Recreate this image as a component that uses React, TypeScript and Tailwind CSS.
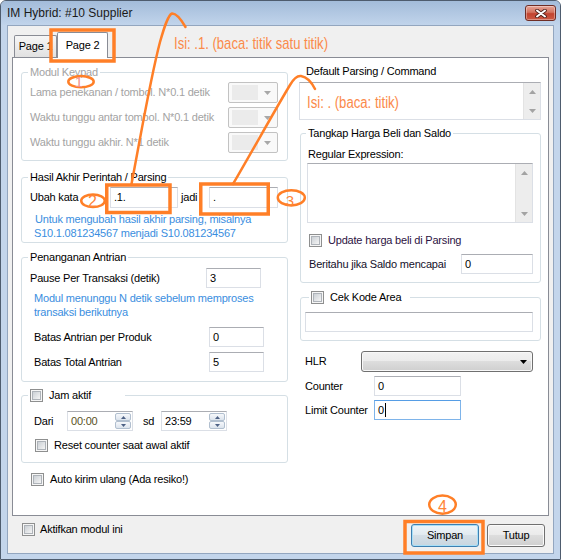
import React from "react";

function Check() {
  return (
    <span className="flex h-[13px] w-[13px] shrink-0 items-center justify-center border border-[#8e8f8f] bg-[#f6f6f6]">
      <span className="h-[9px] w-[9px] border border-[#aeb3b9] bg-gradient-to-br from-[#cbd0d5] to-[#f5f5f5]" />
    </span>
  );
}

function TextBox({
  className = "",
  focused = false,
  children,
}: {
  className?: string;
  focused?: boolean;
  children?: React.ReactNode;
}) {
  return (
    <div
      className={`flex items-center bg-white pl-[3px] text-black ${
        focused
          ? "border border-[#7eb4ea] border-t-[#569de5]"
          : "border border-[#dbdfe6] border-t-[#abadb3]"
      } ${className}`}
    >
      {children}
    </div>
  );
}

function Group({
  legend,
  className = "",
  legendClassName = "ml-[-2px]",
  children,
}: {
  legend: React.ReactNode;
  className?: string;
  legendClassName?: string;
  children?: React.ReactNode;
}) {
  return (
    <fieldset className={`min-w-0 rounded-[3px] border border-[#d5dfe5] ${className}`}>
      <legend className={`px-[2px] leading-[13px] ${legendClassName}`}>{legend}</legend>
      {children}
    </fieldset>
  );
}

function DisabledCombo() {
  return (
    <div className="flex h-[21px] w-[50px] items-center rounded-[2px] border border-[#c2c2c2] bg-[#f9f9f9] pl-[3px] pr-[6px]">
      <div className="h-[15px] w-[26px] bg-[#ebebeb]" />
      <svg className="ml-auto" width="7" height="4" viewBox="0 0 7 4">
        <polygon points="0,0 7,0 3.5,4" fill="#a8a8a8" />
      </svg>
    </div>
  );
}

function ScrollBox({ className = "" }: { className?: string }) {
  return (
    <div className={`flex border border-[#dbdfe6] border-t-[#abadb3] bg-white ${className}`}>
      <div className="flex-1" />
      <div className="flex w-[17px] flex-col justify-between border-l border-[#e3e3e3] bg-[#ededed]">
        <div className="flex h-[17px] items-center justify-center">
          <svg width="7" height="4" viewBox="0 0 7 4">
            <polygon points="0,4 7,4 3.5,0" fill="#a3a3a3" />
          </svg>
        </div>
        <div className="flex h-[17px] items-center justify-center">
          <svg width="7" height="4" viewBox="0 0 7 4">
            <polygon points="0,0 7,0 3.5,4" fill="#a3a3a3" />
          </svg>
        </div>
      </div>
    </div>
  );
}

function SpinHalf({ up }: { up?: boolean }) {
  return (
    <div className="flex h-[8px] items-center justify-center rounded-[2px] border border-[#b1bfcf] bg-gradient-to-b from-[#f6f8fb] to-[#dce4ed]">
      <svg width="5" height="3" viewBox="0 0 5 3">
        <polygon points={up ? "0,3 5,3 2.5,0" : "0,0 5,0 2.5,3"} fill="#4d6185" />
      </svg>
    </div>
  );
}

function TimeBox({ value, valueClass = "" }: { value: string; valueClass?: string }) {
  return (
    <div className="flex h-[20px] w-[66px] items-center border border-[#dbdfe6] border-t-[#abadb3] bg-white pl-[3px] pr-[1px]">
      <span className={valueClass}>{value}</span>
      <div className="ml-auto flex h-[16px] w-[16px] flex-col">
        <SpinHalf up />
        <SpinHalf />
      </div>
    </div>
  );
}

function LeftCol() {
  const keypadRows = [
    "Lama penekanan / tombol. N*0.1 detik",
    "Waktu tunggu antar tombol. N*0.1 detik",
    "Waktu tunggu akhir. N*1 detik",
  ];
  return (
    <div className="flex w-[267px] shrink-0 flex-col">
      <Group
        legend={<span className="text-[#a3a3a3]">Modul Keypad</span>}
        className="mt-[8px] pb-[7px] pl-[8px] pr-[9px] pt-[3px]"
      >
        <div className="flex flex-col gap-[4px]">
          {keypadRows.map((r) => (
            <div key={r} className="flex h-[21px] items-center justify-between text-[#a3a3a3]">
              <span>{r}</span>
              <DisabledCombo />
            </div>
          ))}
        </div>
      </Group>

      <Group
        legend="Hasil Akhir Perintah / Parsing"
        className="mt-[10px] pb-[2px] pl-[8px] pr-[9px] pt-[3px]"
      >
        <div className="flex h-[21px] items-center">
          <span className="w-[80px]">Ubah kata</span>
          <TextBox className="h-[21px] w-[68px]">.1.</TextBox>
          <span className="ml-[3px] w-[28px]">jadi</span>
          <TextBox className="h-[21px] w-[69px]">.</TextBox>
        </div>
        <div className="mt-[4px] pl-[4px] leading-[14px] text-[#3a8ee0]">
          <div className="pl-[1px]">Untuk mengubah hasil akhir parsing, misalnya</div>
          <div>S10.1.081234567 menjadi S10.081234567</div>
        </div>
      </Group>

      <Group legend="Penanganan Antrian" className="mt-[8px] pb-[9px] pl-[8px] pr-[9px] pt-[4px]">
        <div className="flex h-[20px] items-center">
          <span className="w-[176px]">Pause Per Transaksi (detik)</span>
          <TextBox className="h-[20px] w-[55px]">3</TextBox>
        </div>
        <div className="mt-[3px] pl-[4px] leading-[14px] text-[#3a8ee0]">
          <div>Modul menunggu N detik sebelum memproses</div>
          <div>transaksi berikutnya</div>
        </div>
        <div className="mt-[8px] flex h-[20px] items-center pl-[4px]">
          <span className="w-[175px]">Batas Antrian per Produk</span>
          <TextBox className="h-[20px] w-[55px]">0</TextBox>
        </div>
        <div className="mt-[5px] flex h-[20px] items-center pl-[4px]">
          <span className="w-[175px]">Batas Total Antrian</span>
          <TextBox className="h-[20px] w-[55px]">5</TextBox>
        </div>
      </Group>

      <Group
        legend={
          <span className="flex w-[93px] items-center gap-[6px]">
            <Check />
            <span>Jam aktif</span>
          </span>
        }
        className="mt-[7px] pb-[10px] pl-[8px] pr-[9px] pt-[9px]"
      >
        <div className="flex h-[20px] items-center pl-[4px]">
          <span className="w-[33px]">Dari</span>
          <TimeBox value="00:00" valueClass="text-[#5a5224]" />
          <span className="ml-[10px] w-[18px]">sd</span>
          <TimeBox value="23:59" />
        </div>
        <div className="mt-[8px] flex items-center gap-[6px] pl-[5px]">
          <Check />
          <span className="leading-[13px]">Reset counter saat awal aktif</span>
        </div>
      </Group>

      <div className="ml-[10px] mt-[10px] flex items-center gap-[6px]">
        <Check />
        <span className="leading-[13px]">Auto kirim ulang (Ada resiko!)</span>
      </div>
    </div>
  );
}

function RightCol() {
  return (
    <div className="flex w-[242px] shrink-0 flex-col">
      <div className="mt-[7px] pl-[7px] leading-[13px]">Default Parsing / Command</div>
      <ScrollBox className="mt-[4px] h-[38px] w-[242px]" />

      <Group
        legend="Tangkap Harga Beli dan Saldo"
        className="ml-[1px] mt-[7px] w-[241px] pb-[8px] pl-[7px] pr-[7px] pt-[8px]"
      >
        <div className="leading-[13px]">Regular Expression:</div>
        <ScrollBox className="ml-[-1px] mt-[2px] h-[60px] w-[226px]" />
        <div className="ml-[1px] mt-[11px] flex items-center gap-[6px]">
          <Check />
          <span className="leading-[13px] text-[#2c1242]">Update harga beli di Parsing</span>
        </div>
        <div className="ml-[1px] mt-[7px] flex h-[20px] items-center">
          <span className="w-[152px] text-[#14102a]">Beritahu jika Saldo mencapai</span>
          <TextBox className="h-[20px] w-[72px]">0</TextBox>
        </div>
      </Group>

      <Group
        legend={
          <span className="flex w-[97px] items-center gap-[6px]">
            <Check />
            <span>Cek Kode Area</span>
          </span>
        }
        legendClassName="ml-[1px]"
        className="ml-[1px] mt-[8px] w-[241px] pb-[8px] pl-[7px] pr-[7px] pt-[8px]"
      >
        <TextBox className="ml-[-3px] h-[20px] w-[228px]" />
      </Group>

      <div className="mt-[10px] flex h-[21px] items-center pl-[6px]">
        <span className="w-[56px]">HLR</span>
        <div className="flex h-[21px] w-[172px] items-center justify-end rounded-[3px] border border-[#707070] bg-[linear-gradient(#f2f2f2,#ebebeb_50%,#dddddd_50%,#cfcfcf)] pr-[5px] shadow-[inset_0_0_0_1px_#f8f8f8]">
          <svg width="7" height="4" viewBox="0 0 7 4">
            <polygon points="0,0 7,0 3.5,4" fill="#000" />
          </svg>
        </div>
      </div>
      <div className="mt-[4px] flex h-[20px] items-center pl-[6px]">
        <span className="w-[69px]">Counter</span>
        <TextBox className="h-[20px] w-[87px]">0</TextBox>
      </div>
      <div className="mt-[4px] flex h-[20px] items-center pl-[6px]">
        <span className="w-[69px]">Limit Counter</span>
        <TextBox focused className="h-[20px] w-[87px]">
          <span>0</span>
          <span className="ml-[1px] h-[14px] w-[1px] bg-black" />
        </TextBox>
      </div>
    </div>
  );
}

function Annotations() {
  return (
    <svg
      className="pointer-events-none absolute left-0 top-0"
      width="561"
      height="560"
      viewBox="0 0 561 560"
    >
      <g fill="none" stroke="#ff7f27" strokeLinecap="round" strokeLinejoin="round">
        <rect x="51" y="30" width="63" height="31" strokeWidth="3.5" strokeLinecap="butt" strokeLinejoin="miter" />
        <rect x="106.75" y="185" width="63.25" height="27.5" strokeWidth="3.5" strokeLinecap="butt" strokeLinejoin="miter" />
        <rect x="200.75" y="184" width="67.5" height="30" strokeWidth="3.5" strokeLinecap="butt" strokeLinejoin="miter" />
        <rect x="405" y="521.5" width="78" height="31.5" strokeWidth="3.5" strokeLinecap="butt" strokeLinejoin="miter" />
        <ellipse cx="81" cy="81.7" rx="12.7" ry="5.6" strokeWidth="2.5" />
        <ellipse cx="93" cy="200.8" rx="11.8" ry="6.3" strokeWidth="2.5" />
        <ellipse cx="291.3" cy="197.8" rx="13.5" ry="7.6" strokeWidth="2.5" />
        <ellipse cx="442.5" cy="504.6" rx="13.3" ry="9.1" strokeWidth="2.5" />
        <path
          d="M131.5 184 C 140 140, 150 80, 160 42 C 164 28, 168 15, 172 13.5 C 177 13, 182 21, 185.5 27"
          strokeWidth="2.5"
        />
        <path
          d="M233 184 C 250 155, 275 110, 290 85 C 294 78, 297 75.5, 301 76 C 307 77, 312 83, 315 89"
          strokeWidth="2.5"
        />
      </g>
      <g fontFamily="'Liberation Sans', Arial, sans-serif" style={{ letterSpacing: 0 }}>
        <text x="174" y="49" fontSize="17" fill="#fb8a4a" textLength="154" lengthAdjust="spacingAndGlyphs">
          Isi: .1. (baca: titik satu titik)
        </text>
        <text x="307" y="107.5" fontSize="16" fill="#fb8a4a" textLength="92" lengthAdjust="spacingAndGlyphs">
          Isi: . (baca: titik)
        </text>
        <text x="79" y="86.5" fontSize="15" fill="#f3908a" textAnchor="middle">
          1
        </text>
        <text x="92.5" y="206.5" fontSize="16" fill="#ff8436" textAnchor="middle">
          2
        </text>
        <text x="290" y="205.5" fontSize="15" fill="#ff8436" textAnchor="middle">
          3
        </text>
        <text x="442.5" y="512" fontSize="16" fill="#ff8436" textAnchor="middle">
          4
        </text>
      </g>
    </svg>
  );
}

export default function App() {
  return (
    <div className="relative h-[560px] w-[561px] overflow-hidden font-['Liberation_Sans',Arial,sans-serif] text-[11px] tracking-[-0.2px] text-black">
      <div className="flex h-full w-full flex-col rounded-t-[6px] border border-[#4e5c6e] bg-[#c3d5eb]">
        <div className="flex h-[24px] shrink-0 items-center rounded-t-[5px] bg-gradient-to-b from-[#a3bcda] to-[#c1d4eb] pl-[6px] pr-[4px]">
          <span className="text-[12px] tracking-normal text-[#1a1a1a]">IM Hybrid: #10 Supplier</span>
          <div className="ml-auto flex h-[16px] w-[31px] items-center justify-center rounded-[3px] border border-[#6f2d25] bg-[linear-gradient(#e7a597,#d3735f_45%,#c2432f_55%,#cc5a44)] shadow-[inset_0_0_0_1px_rgba(255,255,255,0.35)]">
            <svg width="12" height="9" viewBox="0 0 12 9">
              <path d="M2 1.5 L10 7.5 M10 1.5 L2 7.5" stroke="#4a1d16" strokeWidth="3.6" strokeLinecap="round" />
              <path d="M2 1.5 L10 7.5 M10 1.5 L2 7.5" stroke="#ffffff" strokeWidth="2" strokeLinecap="round" />
            </svg>
          </div>
        </div>

        <div className="mx-[6px] mb-[5px] flex flex-1 flex-col border border-[#93a6bf] bg-[#f0f0f0]">
          <div className="flex h-[31px] shrink-0 items-end pl-[6px]">
            <div className="flex h-[22px] w-[43px] items-center justify-center rounded-t-[2px] border border-b-0 border-[#898c95] bg-gradient-to-b from-[#f6f6f6] to-[#e1e1e1]">
              Page 1
            </div>
            <div className="relative z-10 mb-[-1px] flex h-[26px] w-[51px] items-center justify-center rounded-t-[2px] border border-b-0 border-[#898c95] bg-white">
              Page 2
            </div>
          </div>

          <div className="ml-[4px] flex h-[459px] w-[537px] shrink-0 gap-[11px] border border-[#898c95] bg-white pl-[8px]">
            <LeftCol />
            <RightCol />
          </div>

          <div className="flex items-start">
            <div className="ml-[14px] mt-[7px] flex items-center gap-[5px]">
              <Check />
              <span className="leading-[13px]">Aktifkan modul ini</span>
            </div>
            <div className="ml-auto mr-[8px] mt-[8px] flex gap-[8px]">
              <div className="flex h-[23px] w-[68px] items-center justify-center rounded-[3px] border border-[#3c7fb1] bg-[linear-gradient(#eef5f9,#e2ebf1_45%,#d4dfe7_50%,#c8d5df)] shadow-[inset_0_0_0_1px_#a8dff7]">
                Simpan
              </div>
              <div className="flex h-[23px] w-[58px] items-center justify-center rounded-[3px] border border-[#707070] bg-[linear-gradient(#f2f2f2,#ebebeb_45%,#dddddd_50%,#cfcfcf)] shadow-[inset_0_0_0_1px_#fbfbfb]">
                Tutup
              </div>
            </div>
          </div>
        </div>
      </div>
      <Annotations />
    </div>
  );
}
